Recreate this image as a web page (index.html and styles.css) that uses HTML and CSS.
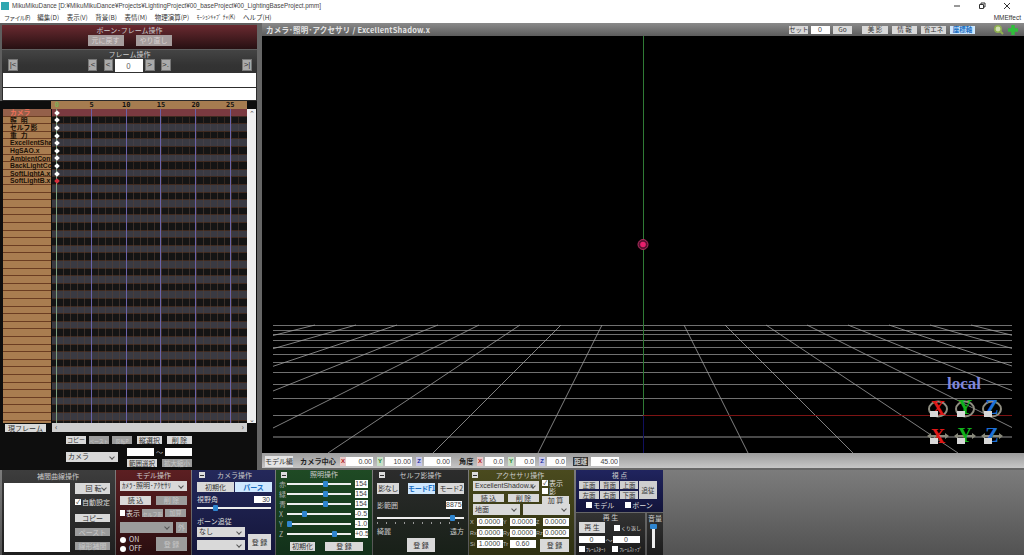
FILE: index.html
```html
<!DOCTYPE html>
<html lang="ja">
<head>
    <meta charset="UTF-8">
    <title>MikuMikuDance</title>
    <link rel="stylesheet" href="styles.css">
</head>
<body>
    <header class="titlebar">
        <span class="app-icon"></span>
        <span class="title-text">MikuMikuDance [D:¥MikuMikuDance¥Projects¥LightingProject¥00_baseProject¥00_LightingBaseProject.pmm]</span>
        <svg class="win-btns" width="62" height="8" viewBox="0 0 62 8">
            <path d="M0 4h6" stroke="#333"/>
            <path d="M25.500 2.500h4v4h-4zM27 2.500v-1.500h4v4h-1.500" fill="none" stroke="#333"/>
            <path d="M50 1l6 6M56 1l-6 6" stroke="#333"/>
        </svg>
    </header>
    <nav class="menubar">
        <span class="file">ファイル(F)</span><span>編集(D)</span><span>表示(V)</span><span>背景(B)</span><span>表情(M)</span><span>物理演算(P)</span><span class="narrow">ﾓｰｼｮﾝｷｬﾌﾟ ﾁｬ(K)</span><span>ヘルプ(H)</span>
        <span class="mmeffect">MMEffect</span>
    </nav>

    <main class="workspace">
        <section class="left">
            <div class="bone-ops">
                <div class="panel-title">ボーン･フレーム操作</div>
                <div class="bone-btns">
                    <button class="btn off">元に戻す</button>
                    <button class="btn off">やり直し</button>
                </div>
            </div>
            <div class="frame-ops">
                <div class="panel-title">フレーム操作</div>
                <div class="frame-nav">
                    <button class="nav">|&lt;</button>
                    <span class="nav-mid">
                        <button class="nav thin">.&lt;</button>
                        <button class="nav thin step">&lt;</button>
                        <input class="frame-no" value="0" readonly>
                        <button class="nav">&gt;</button>
                        <button class="nav jump">&gt;.</button>
                    </span>
                    <button class="nav">&gt;|</button>
                </div>
                <div class="white-row"></div>
                <div class="white-row short"></div>
            </div>
            <div class="timeline">
                <div class="ruler">
                    <div class="ticks"><span class="zero">0</span><span>5</span><span>10</span><span>15</span><span>20</span><span>25</span></div>
                </div>
                <div class="timeline-body">
                    <div class="tracks">
                        <div class="track camera"><span class="name">カメラ</span><span class="cells"><i class="key"></i></span></div>
                        <div class="track"><span class="name wide">照 明</span><span class="cells"><i class="key"></i></span></div>
                        <div class="track grey"><span class="name">セルフ影</span><span class="cells"><i class="key"></i></span></div>
                        <div class="track"><span class="name wide">重 力</span><span class="cells"><i class="key"></i></span></div>
                        <div class="track grey"><span class="name">ExcellentSha</span><span class="cells"><i class="key"></i></span></div>
                        <div class="track"><span class="name">HgSAO.x</span><span class="cells"><i class="key"></i></span></div>
                        <div class="track grey"><span class="name">AmbientCont</span><span class="cells"><i class="key"></i></span></div>
                        <div class="track"><span class="name">BackLightCol</span><span class="cells"><i class="key"></i></span></div>
                        <div class="track grey"><span class="name">SoftLightA.x</span><span class="cells"><i class="key"></i></span></div>
                        <div class="track"><span class="name">SoftLightB.x</span><span class="cells"><i class="key red"></i></span></div>
                        <div class="track-fill"><span class="name"></span><span class="cells"></span></div>
                        <div class="frame-lines"></div>
                    </div>
                    <div class="vscroll"><span>⌃</span><span>⌄</span></div>
                </div>
                <div class="current-row">
                    <button class="btn cur">現フレーム</button>
                    <div class="hscroll"><span>‹</span><span>›</span></div>
                </div>
                <div class="edit-row">
                    <button class="btn copy">コピー</button>
                    <button class="btn off copy">ペースト</button>
                    <button class="btn off copy">反転P</button>
                    <button class="btn sel-v">縦選択</button>
                    <button class="btn sel-v">削 除</button>
                </div>
                <div class="range-row">
                    <div class="sel range-sel">カメラ</div>
                    <div class="range-right">
                        <div class="range-inputs"><span class="box"></span><span class="tilde">～</span><span class="box"></span></div>
                        <div class="range-btns"><button class="btn">範囲選択</button><button class="btn off">拡大縮小</button></div>
                    </div>
                </div>
            </div>
        </section>

        <section class="view">
            <div class="view-head">
                <span class="view-title">カメラ･照明･アクセサリ / ExcellentShadow.x</span>
                <button class="btn tool s1">セット</button>
                <span class="box num-0">0</span>
                <button class="btn tool s1">Go</button>
                <button class="btn tool m1">美 影</button>
                <button class="btn tool m2">情 報</button>
                <button class="btn tool m2">省エネ</button>
                <button class="btn tool m2 on">座標軸</button>
                <svg class="view-icons" width="26" height="12" viewBox="0 0 26 12">
                    <circle cx="5" cy="5" r="3.200" fill="#cfe0b0" stroke="#8fb050" stroke-width="1.500"/>
                    <path d="M7.500 7.500l2.500 2.500" stroke="#8fb050" stroke-width="2"/>
                    <path d="M20 1v10M15 6h10" stroke="#2fbf3a" stroke-width="3.400"/>
                </svg>
            </div>
            <svg class="scene" viewBox="262 36 762 417">
                <defs><clipPath id="floor"><rect x="273" y="320" width="739" height="133"/></clipPath></defs>
                <g clip-path="url(#floor)">
                    <path stroke="#707070" fill="none" d="M273 325.500H1012M273 330.500H1012M273 334.500H1012M273 340.500H1012M273 347.500H1012M273 354.500H1012M273 362.500H1012M273 372.500H1012M273 384.500H1012M273 398.500H1012M273 415.500H643"/>
                    <path stroke="#606060" stroke-width="1.500" fill="none" d="M273 437H1012"/>
                    <path stroke="#a0a0a0" stroke-width=".8" fill="none" d="M602 325L538 453M561 325L433 453M520 325L328 453M479 325L223 453M438 325L118 453M397 325L13 453M356 325L-92 453M315 325L-197 453M684 325L748 453M725 325L853 453M766 325L958 453M807 325L1063 453M848 325L1168 453M889 325L1273 453M930 325L1378 453M971 325L1483 453"/>
                </g>
                <path d="M643.500 36V415" stroke="#2f7a35"/>
                <path d="M643 415.500H1012" stroke="#7d1414"/>
                <path d="M643.500 416V453" stroke="#10105e"/>
                <circle cx="643" cy="244.500" r="5" fill="#5a1030" stroke="#b03060"/>
                <circle cx="643" cy="244.500" r="2.800" fill="#e8206c"/>

                <text x="947" y="389" class="local">local</text>

                <g fill="none" stroke="#8f8d80" stroke-width="2">
                    <ellipse cx="938" cy="409" rx="9" ry="7.500"/><ellipse cx="965" cy="409" rx="9" ry="7.500"/><ellipse cx="992" cy="409" rx="9" ry="7.500"/>
                </g>
                <g fill="#8a8a7c">
                    <path d="M927 436l4-3v2h14v-2l4 3-4 3v-2h-14v2z"/>
                    <path d="M954 436l4-3v2h14v-2l4 3-4 3v-2h-14v2z"/>
                    <path d="M981 436l4-3v2h14v-2l4 3-4 3v-2h-14v2z"/>
                </g>
                <text x="938" y="415" class="axis ax-x">X</text>
                <text x="965" y="414" class="axis ax-y">Y</text>
                <text x="992" y="414" class="axis ax-z">Z</text>
                <text x="938" y="443" class="axis ax-x">X</text>
                <text x="965" y="442" class="axis ax-y">Y</text>
                <text x="992" y="442" class="axis ax-z">Z</text>
                <g fill="#d8d8d8">
                    <rect x="930" y="411" width="8" height="6"/><rect x="957" y="411" width="8" height="6"/><rect x="984" y="411" width="8" height="6"/>
                    <rect x="930" y="438" width="8" height="6"/><rect x="957" y="438" width="8" height="6"/><rect x="984" y="438" width="8" height="6"/>
                </g>
            </svg>
            <div class="strip">
                <button class="btn model-edit">モデル編</button>
                <b class="strip-label">カメラ中心</b>
                <i class="ax r tight">X</i><span class="box val w27">0.00</span>
                <i class="ax g">Y</i><span class="box val w27">10.00</span>
                <i class="ax b">Z</i><span class="box val w27">0.00</span>
                <b class="strip-label angle">角度</b>
                <i class="ax r">X</i><span class="box val w19">0.0</span>
                <i class="ax g">Y</i><span class="box val w19">0.0</span>
                <i class="ax b">Z</i><span class="box val w19">0.0</span>
                <b class="dist">距離</b><span class="box val w28">45.00</span>
            </div>
        </section>
    </main>

    <footer class="dock">
        <section class="panel curve">
            <div class="panel-title">補間曲線操作</div>
            <div class="curve-body">
                <div class="curve-box"></div>
                <div class="curve-side">
                    <div class="sel">回 転</div>
                    <label class="chk"><i class="tick">✓</i>自動設定</label>
                    <button class="btn">コピー</button>
                    <button class="btn off">ペースト</button>
                    <button class="btn off">線形補間</button>
                </div>
            </div>
        </section>

        <section class="panel model">
            <div class="panel-title">モデル操作</div>
            <div class="sel">ｶﾒﾗ･照明･ｱｸｾｻﾘ</div>
            <div class="pair"><button class="btn">読 込</button><button class="btn off">削 除</button></div>
            <div class="show-row">
                <label class="chk"><i></i>表示</label>
                <button class="btn off shadow-btn">セルフ影</button>
                <button class="btn off">加算</button>
            </div>
            <div class="ext-row"><div class="sel off"></div><button class="btn off">外</button></div>
            <div class="model-foot">
                <div class="radios">
                    <label><i></i>ON</label>
                    <label><i></i>OFF</label>
                </div>
                <button class="btn off reg">登 録</button>
            </div>
        </section>

        <section class="panel camera-panel">
            <div class="panel-title"><i class="minus"></i>カメラ操作</div>
            <div class="pair"><button class="btn">初期化</button><button class="btn on">パース</button></div>
            <div class="fov"><span>視野角</span><span class="box">30</span></div>
            <div class="slider"><i class="thumb" style="left: 24%"></i></div>
            <div class="follow-label">ボーン追従</div>
            <div class="follow">
                <div class="follow-sels"><div class="sel">なし</div><div class="sel"></div></div>
                <button class="btn reg">登 録</button>
            </div>
        </section>

        <section class="panel light">
            <div class="panel-title"><i class="minus"></i>照明操作</div>
            <div class="light-row"><span>赤</span><div class="slider"><i class="thumb" style="left: 60%"></i></div><span class="box">154</span></div>
            <div class="light-row"><span>緑</span><div class="slider"><i class="thumb" style="left: 60%"></i></div><span class="box">154</span></div>
            <div class="light-row"><span>青</span><div class="slider"><i class="thumb" style="left: 60%"></i></div><span class="box">154</span></div>
            <div class="light-row"><span>X</span><div class="slider"><i class="thumb" style="left: 26%"></i></div><span class="box">-0.5</span></div>
            <div class="light-row"><span>Y</span><div class="slider"><i class="thumb" style="left: 3%"></i></div><span class="box">-1.0</span></div>
            <div class="light-row"><span>Z</span><div class="slider"><i class="thumb" style="left: 73%"></i></div><span class="box">+0.5</span></div>
            <div class="light-foot"><button class="btn">初期化</button><button class="btn">登 録</button></div>
        </section>

        <section class="panel self-shadow">
            <div class="panel-title"><i class="minus"></i>セルフ影操作</div>
            <div class="mode-row">
                <button class="btn">影なし</button>
                <button class="btn on">モードF1</button>
                <button class="btn">モード2</button>
            </div>
            <div class="range-label"><span>影範囲</span><span class="box">8875</span></div>
            <div class="slider ticked"><i class="thumb" style="left: 86%"></i></div>
            <div class="ends"><span>綺麗</span><span>遠方</span></div>
            <button class="btn reg">登 録</button>
        </section>

        <section class="panel accessory">
            <div class="panel-title"><i class="minus"></i>アクセサリ操作</div>
            <div class="acc-top">
                <div class="acc-left">
                    <div class="sel">ExcellentShadow.x</div>
                    <div class="pair"><button class="btn">読 込</button><button class="btn">削 除</button></div>
                </div>
                <div class="acc-right">
                    <label class="chk"><i class="tick">✓</i>表示</label>
                    <label class="chk"><i></i>影</label>
                    <button class="btn">加 算</button>
                </div>
            </div>
            <div class="pair sels"><div class="sel">地面</div><div class="sel"></div></div>
            <div class="coord"><span>X</span><b class="box">0.0000</b><span>Y</span><b class="box">0.0000</b><span>Z</span><b class="box">0.0000</b></div>
            <div class="coord"><span>Rx</span><b class="box">0.0000</b><span>Ry</span><b class="box">0.0000</b><span>Rz</span><b class="box">0.0000</b></div>
            <div class="coord last"><span>Si</span><b class="box">1.0000</b><span>Tr</span><b class="box">0.60</b><button class="btn reg">登 録</button></div>
        </section>

        <div class="right-stack">
            <div class="right-top">
                <section class="panel viewpoint">
                    <div class="panel-title">視 点</div>
                    <div class="vp-grid">
                        <button class="btn">正面</button><button class="btn">背面</button><button class="btn">上面</button>
                        <button class="btn follow-btn">追従</button>
                        <button class="btn">左面</button><button class="btn">右面</button><button class="btn">下面</button>
                    </div>
                    <div class="vp-checks"><label class="chk"><i></i>モデル</label><label class="chk"><i></i>ボーン</label></div>
                </section>
            </div>
            <div class="right-bottom">
                <section class="panel play">
                    <div class="panel-title">再 生</div>
                    <div class="play-row"><button class="btn">再 生</button><label class="chk tiny"><i></i>くり返し</label></div>
                    <div class="play-range"><span class="box">0</span><span class="tilde">～</span><span class="box">0</span></div>
                    <div class="play-checks"><label class="chk tiny"><i></i>ﾌﾚｰﾑｽﾀｰﾄ</label><label class="chk tiny"><i></i>ﾌﾚｰﾑｽﾄｯﾌﾟ</label></div>
                </section>
                <section class="panel volume">
                    <div class="panel-title">音量</div>
                    <div class="v-slider"><i></i></div>
                </section>
            </div>
        </div>
    </footer>
</body>
</html>
```

FILE: styles.css
```css
* {
    margin: 0;
    padding: 0;
    box-sizing: border-box;
    font-family: "Noto Sans CJK JP", "Liberation Sans", sans-serif;
}

body {
    width: 1024px;
    height: 555px;
    overflow: hidden;
    background: #666;
    font-size: 7px;
}

i {
    font-style: normal;
}

/* window chrome */
.titlebar {
    height: 11px;
    background: #fff;
    display: flex;
    align-items: center;
    color: #444;
}

.app-icon {
    width: 8px;
    height: 8px;
    margin: 0 3px 0 1px;
    background: #2fa7b0;
}

.title-text {
    font-family: "Liberation Sans", sans-serif;
    font-size: 6.300px;
    white-space: nowrap;
}

.win-btns {
    margin-left: auto;
    margin-right: 8px;
}

.menubar {
    height: 12px;
    background: #fff;
    display: flex;
    align-items: center;
    gap: 7.500px;
    padding-left: 4px;
    color: #333;
    font-size: 6.500px;
    white-space: nowrap;
}

.menubar .file {
    font-size: 6px;
    letter-spacing: -.8px;
}

.menubar .narrow {
    font-size: 5.500px;
}

.mmeffect {
    margin-left: auto;
    margin-right: 3px;
    font-family: "Liberation Sans", sans-serif;
}

/* shared controls */
.btn {
    height: 9px;
    border: none;
    background: #d9d9d9;
    color: #333;
    font-size: 7px;
    line-height: 1;
    white-space: nowrap;
}

.btn.off {
    background: #9c9c9c;
    color: #c6c6c6;
}

.btn.on {
    background: #cfe8ff;
    color: #1b6fc2;
    font-weight: bold;
}

.box {
    display: block;
    background: #fff;
    color: #444;
    height: 8px;
    line-height: 8px;
    font-size: 7px;
    font-weight: normal;
    text-align: right;
    padding-right: 1px;
    font-family: "Liberation Sans", sans-serif;
}

.sel {
    position: relative;
    height: 10px;
    line-height: 10px;
    padding-left: 2px;
    background: #d9d9d9;
    color: #333;
    font-family: "Liberation Sans", "Noto Sans CJK JP", sans-serif;
    font-size: 7px;
    white-space: nowrap;
}

.sel::after {
    content: "";
    position: absolute;
    right: 4px;
    top: 3px;
    width: 3px;
    height: 3px;
    border-right: 1px solid #555;
    border-bottom: 1px solid #555;
    transform: rotate(45deg);
}

.sel.off {
    background: #9c9c9c;
}

.slider {
    position: relative;
    height: 2px;
    background: #eee;
}

.thumb {
    position: absolute;
    top: -2px;
    width: 5px;
    height: 6px;
    margin-left: -2px;
    background: #2f86d0;
    border-radius: 1px;
}

.slider.ticked::after {
    content: "";
    position: absolute;
    left: 0;
    right: 0;
    top: 5px;
    height: 2px;
    background: repeating-linear-gradient(90deg, #999 0 1px, transparent 1px 9px);
}

.chk {
    display: flex;
    align-items: center;
    gap: 1px;
    height: 8px;
    line-height: 8px;
    color: #ddd;
    font-size: 7px;
    white-space: nowrap;
}

.chk i {
    display: block;
    width: 6px;
    height: 6px;
    background: #fff;
    color: #222;
    font-size: 6px;
    line-height: 6px;
    text-align: center;
}

.chk.tiny {
    font-size: 5px;
}

.panel-title {
    position: relative;
    height: 10px;
    line-height: 10px;
    text-align: center;
    color: #ccc;
    font-size: 7px;
}

.minus {
    position: absolute;
    left: 2px;
    top: 2px;
    width: 6px;
    height: 6px;
    background: #ddd;
}

.minus::after {
    content: "";
    position: absolute;
    left: 1px;
    top: 2.500px;
    width: 4px;
    height: 1px;
    background: #333;
}

/* main area */
.workspace {
    height: 447px;
    display: flex;
    background: #666;
}

.left {
    width: 257px;
    margin-right: 5px;
    padding: 2px 0 0 2px;
    background: #5e5e5e;
    display: flex;
    flex-direction: column;
}

.bone-ops {
    height: 24px;
    background: linear-gradient(#6a2a30, #261012);
    margin-bottom: 1px;
}

.bone-btns {
    display: flex;
    justify-content: center;
    gap: 12px;
}

.bone-btns .btn {
    width: 36px;
    height: 11px;
    background: #a69d9d;
    color: #d8d0d0;
}

.frame-ops {
    height: 51px;
    padding: 0 1px;
    background: linear-gradient(#444 0, #333 15px, #2a2a2a);
}

.frame-ops .panel-title {
    height: 9px;
    line-height: 9px;
}

.frame-nav {
    display: flex;
    justify-content: space-between;
    padding: 0 4px 0 5px;
    height: 13px;
}

.nav-mid {
    display: flex;
    gap: 2px;
    margin-right: 2px;
}

.nav {
    width: 10px;
    height: 12px;
    border: 1px solid #777;
    background: #aaa;
    color: #333;
    font-size: 8px;
    line-height: 8px;
    white-space: nowrap;
    font-family: "Liberation Sans", sans-serif;
}

.nav.thin {
    width: 9px;
}

.nav.step {
    margin-left: 5px;
}

.nav.jump {
    margin-left: 4px;
}

.frame-no {
    width: 28px;
    height: 13px;
    border: none;
    background: #fff;
    color: #666;
    text-align: center;
    font-size: 8px;
}

.white-row {
    height: 14px;
    background: #fff;
    margin: 1px 0;
}

.white-row.short {
    height: 12px;
}

/* timeline */
.timeline {
    flex: 1;
    background: #0e0e0e;
    margin-left: -2px;
    padding-left: 3px;
}

.ruler {
    height: 8px;
    margin-left: 48px;
    width: 196px;
    background: #a67c50;
    overflow: hidden;
}

.ticks {
    display: flex;
    margin-left: -11.500px;
}

.ticks span {
    width: 34.700px;
    flex: none;
    text-align: center;
    font: bold 7px/8px "DejaVu Sans Mono", monospace;
    color: #111;
}

.ticks .zero {
    color: #7fae58;
}

.timeline-body {
    display: flex;
    height: 314px;
}

.tracks {
    position: relative;
    width: 244px;
    overflow: hidden;
}

.track {
    display: flex;
    height: 7.600px;
}

.name {
    display: block;
    width: 48px;
    flex: none;
    margin-right: 1px;
    background: #a97d50;
    box-shadow: inset 0 -1px #6b3d22;
    color: #1c1208;
    font: bold 6.800px/7px "Liberation Sans", "Noto Sans CJK JP", sans-serif;
    padding-left: 7px;
    white-space: nowrap;
}

.name.wide {
    letter-spacing: 1px;
}

.cells {
    display: flex;
    align-items: center;
    flex: 1;
    background-color: #141414;
    background-image: repeating-linear-gradient(90deg, transparent 0 6px, #33261f 6px 7px);
    background-position: -2px 0;
    box-shadow: inset 0 -1px #3f2a20;
}

.track.grey .cells {
    background-color: #3a3a42;
    background-image: repeating-linear-gradient(90deg, transparent 0 6px, #454046 6px 7px);
}

.track.camera .cells {
    background: #7a3a40;
}

.track.camera .name {
    background: #94604a;
    color: #f0705a;
}

.key {
    width: 4px;
    height: 4px;
    margin-left: 3px;
    background: #fff;
    transform: rotate(45deg);
    position: relative;
    z-index: 1;
}

.key.red {
    background: #d8303c;
}

.track-fill {
    display: flex;
    height: 238px;
}

.track-fill .name {
    background: repeating-linear-gradient(#a97d50 0 6.600px, #6b3d22 6.600px 7.600px);
    box-shadow: none;
}

.track-fill .cells {
    background:
        repeating-linear-gradient(90deg, transparent 0 6px, rgba(84, 64, 54, .6) 6px 7px) -2px 0,
        repeating-linear-gradient(#3a3a42 0 6.600px, #3f2a20 6.600px 7.600px, #141414 7.600px 14.200px, #3f2a20 14.200px 15.200px);
    box-shadow: none;
}

/* frame 0 and every 5th frame, drawn over the track cells */
.frame-lines {
    position: absolute;
    left: 49px;
    right: 0;
    top: 0;
    bottom: 0;
    background:
        linear-gradient(#7f9f7f, #7f9f7f) 4px 0 / 1px 100% no-repeat,
        linear-gradient(#6a62a8, #6a62a8) 39px 0 / 1px 100% no-repeat,
        linear-gradient(#6a62a8, #6a62a8) 74px 0 / 1px 100% no-repeat,
        linear-gradient(#6a62a8, #6a62a8) 108px 0 / 1px 100% no-repeat,
        linear-gradient(#6a62a8, #6a62a8) 143px 0 / 1px 100% no-repeat,
        linear-gradient(#6a62a8, #6a62a8) 178px 0 / 1px 100% no-repeat;
}

.vscroll {
    width: 9px;
    background: #f0f0f0;
    display: flex;
    flex-direction: column;
    justify-content: space-between;
    align-items: center;
    color: #555;
    font-size: 7px;
    line-height: 8px;
}

.current-row {
    display: flex;
    height: 10px;
    gap: 6px;
    padding-left: 2px;
    align-items: flex-start;
}

.btn.cur {
    width: 41px;
    height: 8px;
    margin-top: 1px;
}

.hscroll {
    width: 195px;
    height: 9px;
    background: #cfcfcf;
    display: flex;
    justify-content: space-between;
    padding: 0 3px;
    color: #444;
    font-size: 8px;
    line-height: 8px;
}

.edit-row {
    display: flex;
    margin: 3px 0 0 63px;
    gap: 3px;
}

.edit-row .btn.copy {
    width: 20px;
    height: 8px;
    font-size: 6px;
}

.edit-row .btn.off.copy {
    font-size: 5px;
}

.edit-row .btn.sel-v {
    width: 25px;
    height: 8px;
    margin-left: 2px;
}

.range-row {
    display: flex;
    margin: 4px 0 0 63px;
}

.range-sel {
    width: 52px;
    margin: 4px 9px 0 0;
}

.range-inputs {
    display: flex;
    height: 8px;
}

.range-inputs .box {
    width: 27px;
}

.tilde {
    width: 11px;
    text-align: center;
    color: #bbb;
    line-height: 8px;
}

.range-btns {
    display: flex;
    justify-content: space-between;
    margin-top: 3px;
}

.range-btns .btn {
    width: 30px;
    height: 8px;
    font-size: 6.500px;
}

/* 3d view */
.view {
    flex: 1;
    display: flex;
    flex-direction: column;
}

.view-head {
    height: 13px;
    display: flex;
    align-items: center;
    background: linear-gradient(#8a8a8a, #5c5c5c);
    padding-left: 4px;
    gap: 3px;
}

.view-title {
    margin-right: auto;
    color: #e4e4e4;
    font-size: 7.500px;
    font-weight: bold;
    letter-spacing: .2px;
}

.btn.tool {
    height: 8px;
    font-size: 6.500px;
}

.tool.s1 {
    width: 19px;
}

.tool.m1 {
    width: 26px;
    margin-left: 7px;
}

.tool.m2 {
    width: 25px;
    margin-left: 1px;
}

.num-0 {
    width: 19px;
    text-align: center;
}

.view-icons {
    margin: 0 5px 0 15px;
}

.scene {
    display: block;
    width: 762px;
    height: 417px;
    background: #000;
}

.local {
    font: bold 17px "Liberation Serif", serif;
    fill: #7f86dc;
}

.axis {
    font: bold 20px "Liberation Serif", serif;
    text-anchor: middle;
}

.ax-x { fill: #e01818; }
.ax-y { fill: #12b01c; }
.ax-z { fill: #1c70d8; }

.strip {
    flex: 1;
    display: flex;
    align-items: center;
    padding: 0 0 1px 3px;
    background: linear-gradient(#9c9c9c, #c6c6c6 88%, #666 88%);
}

.model-edit {
    width: 28px;
    height: 11px;
    background: #e4e4e4;
    margin-right: 7px;
}

.strip-label {
    width: 36px;
    flex: none;
    font-size: 7.200px;
    color: #222;
    white-space: nowrap;
}

.strip-label.angle {
    width: 14px;
    margin-left: 8px;
}

.ax {
    width: 6px;
    height: 9px;
    margin: 0 2px 0 4px;
    text-align: center;
    font: bold 6px/9px "Liberation Sans", sans-serif;
}

.ax.tight {
    margin-right: 0;
}

.ax.r { background: #e8c8c8; color: #b02020; }
.ax.g { background: #c8e0c8; color: #1f7a2a; }
.ax.b { background: #c8c8e8; color: #2030a0; }

.val {
    height: 9px;
    line-height: 9px;
}

.w27 { width: 27px; }
.w19 { width: 19px; }
.w28 { width: 28px; }

.dist {
    width: 15px;
    height: 9px;
    margin: 0 3px 0 7px;
    background: #333;
    color: #ccc;
    font-size: 6.500px;
    line-height: 9px;
    text-align: center;
    white-space: nowrap;
}

/* bottom dock */
.dock {
    height: 85px;
    display: flex;
    padding-left: 2px;
    gap: 1px;
    background: linear-gradient(#7c7c7c, #525252);
}

.panel {
    flex: none;
    height: 100%;
}

.curve {
    width: 113px;
    background: linear-gradient(#3d3d3d, #1e1e1e);
    padding: 0 3px 0 2px;
}

.curve .panel-title {
    height: 13px;
    line-height: 13px;
}

.curve-body {
    display: flex;
    gap: 5px;
}

.curve-box {
    width: 68px;
    height: 69px;
    background: #fff;
}

.curve-side {
    flex: 1;
    display: flex;
    flex-direction: column;
    padding-right: 2px;
}

.curve-side .sel {
    height: 11px;
    line-height: 11px;
    text-align: center;
}

.curve-side .chk {
    margin: 4px 0 8px;
}

.curve-side .btn {
    height: 8px;
    margin-bottom: 6px;
}

.model {
    width: 75px;
    padding: 0 4px;
    background: linear-gradient(#5c1f22, #2a0e10);
}

.model .panel-title,
.camera-panel .panel-title {
    height: 11px;
    line-height: 11px;
}

.pair {
    display: flex;
    justify-content: space-between;
}

.model .pair {
    margin-top: 5px;
}

.model .pair .btn {
    width: 31px;
}

.show-row {
    display: flex;
    align-items: center;
    gap: 2px;
    margin-top: 4px;
}

.show-row .btn {
    width: 21px;
    height: 8px;
    font-size: 6px;
}

.show-row .shadow-btn {
    font-size: 5px;
}

.show-row .chk {
    width: 20px;
}

.ext-row {
    display: flex;
    justify-content: space-between;
    margin-top: 5px;
}

.ext-row .sel {
    width: 53px;
    height: 11px;
}

.ext-row .btn {
    width: 11px;
    height: 11px;
}

.model-foot {
    display: flex;
    justify-content: space-between;
    margin-top: 4px;
}

.radios {
    margin-top: -2px;
}

.radios label {
    display: flex;
    align-items: center;
    gap: 3px;
    height: 9px;
    line-height: 9px;
    color: #ddd;
}

.radios i {
    width: 6px;
    height: 6px;
    background: #fff;
    border-radius: 50%;
}

.model .reg {
    width: 31px;
    height: 14px;
}

.camera-panel {
    width: 83px;
    padding: 0 3px 0 5px;
    background: linear-gradient(#24285a, #14163a);
}

.camera-panel .pair {
    margin-top: 1px;
}

.camera-panel .pair .btn {
    height: 10px;
    width: 37px;
}

.fov {
    display: flex;
    justify-content: space-between;
    align-items: center;
    height: 7px;
    line-height: 7px;
    color: #ddd;
    margin-top: 4px;
    padding-right: 1px;
}

.fov .box {
    width: 17px;
    height: 7px;
    line-height: 7px;
}

.camera-panel .slider {
    margin: 4px 1px 0 0;
}

.follow-label {
    color: #ddd;
    margin-top: 8px;
    height: 9px;
    line-height: 9px;
}

.follow {
    display: flex;
    gap: 3px;
    margin-top: 1px;
}

.follow-sels {
    width: 48px;
    display: flex;
    flex-direction: column;
    gap: 3px;
}

.follow .reg {
    width: 23px;
    height: 16px;
    margin-top: 7px;
}

.light {
    width: 96px;
    padding: 0 3px;
    background: linear-gradient(#1f4a24, #12301a);
}

.light .panel-title {
    height: 9px;
    line-height: 9px;
}

.light-row {
    display: flex;
    align-items: center;
    height: 10px;
    line-height: 10px;
    color: #aaa;
}

.light-row > span:first-child {
    width: 8px;
}

.light-row .slider {
    width: 64px;
}

.light-row .box {
    width: 13px;
    margin-left: 4px;
}

.light-foot {
    display: flex;
    gap: 10px;
    padding-left: 11px;
    margin-top: 3px;
}

.light-foot .btn:first-child {
    width: 25px;
}

.light-foot .btn:last-child {
    width: 38px;
}

.self-shadow {
    width: 95px;
    padding: 0 4px;
    background: linear-gradient(#2c2c2c, #182018);
}

.mode-row {
    display: flex;
    gap: 3px;
    margin-top: 3px;
}

.mode-row .btn {
    width: 27px;
    height: 11px;
    letter-spacing: -.4px;
}

.mode-row .btn:first-child {
    width: 23px;
    margin-right: 6px;
}

.range-label {
    display: flex;
    justify-content: space-between;
    align-items: center;
    height: 8px;
    line-height: 8px;
    color: #ccc;
    margin-top: 7px;
    padding-right: 2px;
}

.range-label .box {
    width: 16px;
    text-align: center;
}

.self-shadow .slider {
    margin-top: 8px;
}

.ends {
    display: flex;
    justify-content: space-between;
    color: #ccc;
    margin-top: 7px;
    height: 10px;
    line-height: 10px;
}

.self-shadow .reg {
    display: block;
    width: 28px;
    height: 14px;
    margin: 2px 0 0 30px;
}

.accessory {
    width: 105px;
    padding: 0 4px 0 1px;
    background: linear-gradient(#4a4a1e, #2e3012);
}

.acc-top {
    display: flex;
    justify-content: space-between;
    height: 24px;
    padding-left: 3px;
}

.acc-left {
    width: 66px;
    padding-top: 1px;
}

.acc-left .pair {
    margin-top: 3px;
}

.acc-left .pair .btn {
    width: 31px;
    height: 8px;
}

.acc-right {
    width: 28px;
    margin-top: -1px;
}

.acc-right .btn {
    width: 27px;
    height: 8px;
    display: block;
    margin-top: 1px;
}

.pair.sels {
    padding-left: 3px;
}

.pair.sels .sel {
    width: 47px;
    height: 11px;
    font-family: "Noto Sans CJK JP", sans-serif;
}

.coord {
    display: flex;
    align-items: center;
    height: 8px;
    line-height: 8px;
    margin-top: 3px;
    color: #bbb;
}

.coord span {
    width: 7px;
    font: 5.500px/8px "Liberation Sans", sans-serif;
    white-space: nowrap;
}

.coord .box {
    width: 26px;
    text-align: center;
}

.coord.last {
    align-items: flex-start;
}

.coord.last .reg {
    width: 29px;
    height: 13px;
    margin: -1px 0 0 4px;
    flex: none;
}

.right-stack {
    width: 87px;
    margin-left: 1px;
    display: flex;
    flex-direction: column;
    gap: 1px;
    flex: none;
}

.right-top {
    height: 42px;
}

.viewpoint {
    background: linear-gradient(#20245e, #12143a);
    padding: 0 3px;
}

.vp-grid {
    display: grid;
    grid-template-columns: 20px 19px 18px 18px;
    grid-template-rows: 8px 8px;
    column-gap: 1px;
    row-gap: 2px;
    margin-top: 1px;
}

.vp-grid .btn {
    height: 8px;
    background: #cfcfcf;
    font-size: 6.500px;
}

.vp-grid .follow-btn {
    grid-column: 4;
    grid-row: 1 / 3;
    height: 18px;
}

.vp-checks {
    display: flex;
    justify-content: center;
    gap: 11px;
    margin-top: 2px;
}

.right-bottom {
    flex: 1;
    display: flex;
    gap: 2px;
}

.play {
    width: 69px;
    padding: 0 3px;
    background: linear-gradient(#333, #1c1c1c);
}

.play .panel-title {
    height: 9px;
    line-height: 9px;
}

.play-row {
    display: flex;
    gap: 9px;
    align-items: center;
}

.play-row .btn {
    width: 26px;
    height: 11px;
}

.play-range {
    display: flex;
    margin-top: 3px;
    height: 7px;
}

.play-range .box {
    width: 26px;
    height: 7px;
    line-height: 7px;
    text-align: center;
}

.play-range .box:last-child {
    width: 27px;
}

.play-range .tilde {
    width: 8px;
}

.play-checks {
    display: flex;
    justify-content: space-between;
    margin-top: 2px;
}

.volume {
    width: 16px;
    background: linear-gradient(#333, #1c1c1c);
}

.v-slider {
    position: relative;
    width: 3px;
    height: 24px;
    margin: 1px 0 0 5px;
    background: #eee;
}

.v-slider i {
    position: absolute;
    left: -2px;
    top: 0;
    width: 7px;
    height: 5px;
    background: #2f86d0;
    border-radius: 1px;
}
```
